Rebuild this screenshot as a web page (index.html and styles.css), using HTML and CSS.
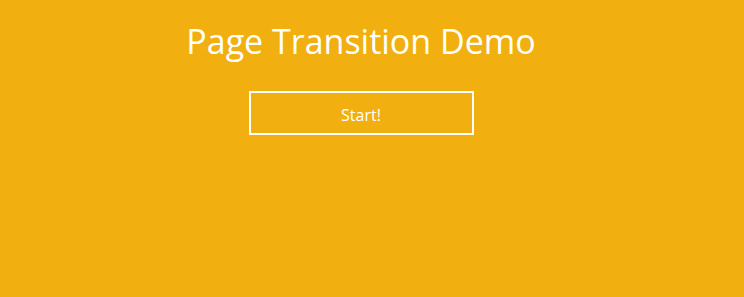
FILE: index.html
```html
<!DOCTYPE html>
<html lang="en">
    <head>
        <meta charset="utf-8" />
        <title>Page Transition Demo</title>
        <link rel="stylesheet" href="styles.css">
    </head>
    <body>
        <div class="page">
            <h1>Page Transition Demo</h1>
            <button class="start">Start!</button>
        </div>
    </body>
</html>
```

FILE: styles.css
```css
* {
    margin: 0;
    padding: 0;
}
html, body {
    height: 100%;
}
body {
    background-color: #f2af10;
    color: #fff;
    font-family: "Open Sans", "Noto Sans", sans-serif;
}
.page {
    width: 706px;
    margin-left: 8px;
    display: flex;
    flex-direction: column;
    align-items: center;
}
h1 {
    font-size: 34px;
    font-weight: 400;
    line-height: 44px;
    padding-top: 19px;
}
.start {
    margin-top: 28px;
    width: 225px;
    height: 44px;
    padding-top: 3px;
    border: 2px solid #fff;
    background-color: transparent;
    color: #fff;
    font-family: "Open Sans", "Noto Sans", sans-serif;
    font-size: 16px;
    cursor: pointer;
    outline: none;
}
```
